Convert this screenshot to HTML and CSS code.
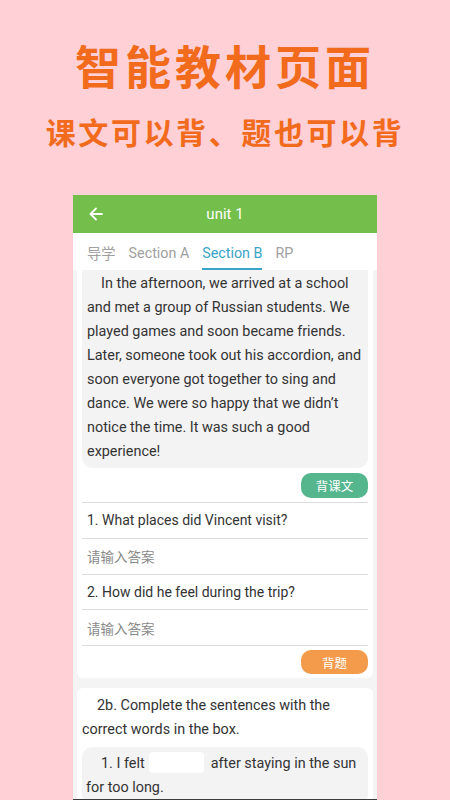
FILE: index.html
```html
<!DOCTYPE html>
<html lang="zh">
<head>
<meta charset="utf-8">
<title>智能教材页面</title>
<link rel="stylesheet" href="styles.css">
</head>
<body>
<header class="promo">
  <h1 class="promo-title">智能教材页面</h1>
  <p class="promo-sub">课文可以背、题也可以背</p>
</header>
<div class="phone">
  <div class="appbar">
    <svg class="back" width="16" height="16" viewBox="0 0 16 16"><path d="M14 8H2.5M8 2.5L2.5 8L8 13.5" fill="none" stroke="#fff" stroke-width="1.8" stroke-linecap="round" stroke-linejoin="round"/></svg>
    <span class="appbar-title">unit 1</span>
  </div>
  <nav class="tabs">
    <span class="tab">导学</span>
    <span class="tab">Section A</span>
    <span class="tab active">Section B</span>
    <span class="tab">RP</span>
  </nav>
  <main class="content">
    <section class="card card-first">
      <p class="passage">In the afternoon, we arrived at a school and met a group of Russian students. We played games and soon became friends. Later, someone took out his accordion, and soon everyone got together to sing and dance. We were so happy that we didn’t notice the time. It was such a good experience!</p>
      <div class="btn-row"><span class="btn btn-green">背课文</span></div>
      <div class="qa-row q">1. What places did Vincent visit?</div>
      <div class="qa-row a">请输入答案</div>
      <div class="qa-row q">2. How did he feel during the trip?</div>
      <div class="qa-row a">请输入答案</div>
      <div class="btn-row btn-row-last"><span class="btn btn-orange">背题</span></div>
    </section>
    <section class="card card-second">
      <p class="instr">2b. Complete the sentences with the correct words in the box.</p>
      <p class="fill">1. I felt <span class="blank"></span> after staying in the sun for too long.</p>
    </section>
  </main>
  <div class="navline"></div>
</div>
</body>
</html>
```
FILE: styles.css
```css
* { box-sizing: border-box; }
html, body { margin: 0; padding: 0; }
body {
  width: 450px;
  height: 800px;
  overflow: hidden;
  background: #ffd0d6;
  font-family: Roboto, "Noto Sans", "Noto Sans CJK SC", sans-serif;
  color: #333;
}
.promo {
  height: 195px;
  display: flex;
  flex-direction: column;
  align-items: center;
  padding-top: 33px;
}
.promo-title {
  margin: 0;
  font-family: "Noto Sans CJK SC", sans-serif;
  font-weight: 700;
  font-size: 46px;
  line-height: 62px;
  letter-spacing: 4px;
  color: #f26a1b;
}
.promo-sub {
  margin: 16px 0 0;
  font-family: "Noto Sans CJK SC", sans-serif;
  font-weight: 700;
  font-size: 30px;
  line-height: 40px;
  letter-spacing: 2.6px;
  color: #f26a1b;
}
.phone {
  width: 304px;
  height: 605px;
  margin: 0 auto;
  background: #f4f4f4;
  display: flex;
  flex-direction: column;
  overflow: hidden;
}
.appbar {
  height: 38px;
  flex: none;
  background: #74be4b;
  display: flex;
  align-items: center;
  position: relative;
  padding-left: 15px;
}
.back { display: block; }
.appbar-title {
  position: absolute;
  left: 0; right: 0;
  text-align: center;
  color: #fff;
  font-size: 15px;
  pointer-events: none;
}
.tabs {
  height: 37px;
  flex: none;
  background: #fff;
  display: flex;
  align-items: stretch;
  gap: 13px;
  padding-left: 14px;
  font-size: 14.3px;
}
.tab {
  color: #a0a0a0;
  display: flex;
  align-items: center;
  border-bottom: 2px solid transparent;
  padding-top: 4px;
}
.tab.active {
  color: #3aa4c8;
  border-bottom-color: #3aa4c8;
}
.content {
  flex: 1;
  overflow: hidden;
  padding: 0 4px;
}
.card {
  background: #fff;
  border-radius: 6px;
  padding: 4px 5px;
}
.card-first { margin-top: -12px; }
.card-second { margin-top: 10px; padding-top: 6px; }
.passage {
  margin: 0;
  background: #f3f3f3;
  border-radius: 10px;
  padding: 10px 5px 4px;
  font-size: 14.4px;
  line-height: 24px;
  text-indent: 14px;
}
.btn-row {
  display: flex;
  justify-content: flex-end;
  padding: 5px 0 4px;
}
.btn-row-last {
  border-top: 1px solid #dcdcdc;
  padding: 4px 0 0;
}
.btn {
  width: 67px;
  height: 25px;
  border-radius: 10px;
  color: #fff;
  font-size: 12.5px;
  display: flex;
  align-items: center;
  justify-content: center;
  font-family: "Noto Sans CJK SC", sans-serif;
}
.btn-green { background: #55b68e; }
.btn-orange { background: #f39a4b; height: 24px; }
.qa-row {
  height: 35.75px;
  border-top: 1px solid #dcdcdc;
  display: flex;
  align-items: center;
  padding-left: 5px;
  font-size: 14px;
}
.qa-row.a {
  color: #8a8a8a;
  font-family: "Noto Sans CJK SC", sans-serif;
  font-size: 13.5px;
}
.instr {
  margin: 0;
  font-size: 14.4px;
  line-height: 24px;
  text-indent: 15px;
}
.fill {
  margin: 5px 0 0;
  background: #f3f3f3;
  border-radius: 10px;
  padding: 5px 4px 4px;
  font-size: 14.4px;
  line-height: 24px;
  text-indent: 15px;
}
.blank {
  display: inline-block;
  width: 55px;
  height: 21px;
  background: #fff;
  border-radius: 4px;
  vertical-align: -5px;
  margin: 0 3px 0 1px;
  text-indent: 0;
}
.navline {
  height: 1px;
  flex: none;
  background: #3a3a3a;
}
```
